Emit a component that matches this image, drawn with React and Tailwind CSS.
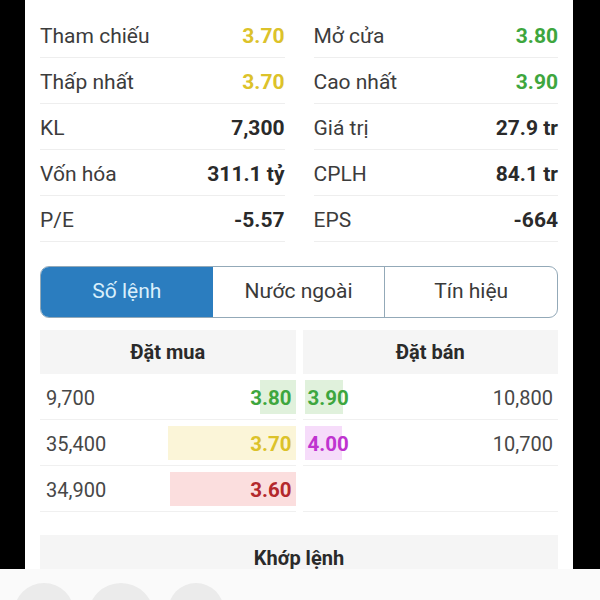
import React from "react";

const stats = [
  [
    { label: "Tham chiếu", value: "3.70", color: "text-[#dcc22a]" },
    { label: "Thấp nhất", value: "3.70", color: "text-[#dcc22a]" },
    { label: "KL", value: "7,300", color: "text-[#2a2a2a]" },
    { label: "Vốn hóa", value: "311.1 tỷ", color: "text-[#2a2a2a]" },
    { label: "P/E", value: "-5.57", color: "text-[#2a2a2a]" },
  ],
  [
    { label: "Mở cửa", value: "3.80", color: "text-[#3ea63e]" },
    { label: "Cao nhất", value: "3.90", color: "text-[#3ea63e]" },
    { label: "Giá trị", value: "27.9 tr", color: "text-[#2a2a2a]" },
    { label: "CPLH", value: "84.1 tr", color: "text-[#2a2a2a]" },
    { label: "EPS", value: "-664", color: "text-[#2a2a2a]" },
  ],
];

// bên mua: khối lượng trái, giá phải
const bids = [
  { vol: "9,700", price: "3.80", text: "text-[#3ea63e]", bar: "bg-[#e0f1dc] w-[36px]" },
  { vol: "35,400", price: "3.70", text: "text-[#dcc22a]", bar: "bg-[#fbf5d8] w-[128px]" },
  { vol: "34,900", price: "3.60", text: "text-[#b3282c]", bar: "bg-[#fbdede] w-[126px]" },
];

const asks = [
  { vol: "10,800", price: "3.90", text: "text-[#3ea63e]", bar: "bg-[#e0f1dc] w-[38px]" },
  { vol: "10,700", price: "4.00", text: "text-[#bf34cf]", bar: "bg-[#f6dcfa] w-[37px]" },
  null,
];

function StatCol({ rows }) {
  return (
    <div className="flex flex-col">
      {rows.map((r) => (
        <div
          key={r.label}
          className="h-[46px] flex items-center justify-between border-b border-[#eeeeee] pt-[5px]"
        >
          <span className="text-[21px] text-[#3c3c3c]">{r.label}</span>
          <span className={`text-[21px] font-bold ${r.color}`}>{r.value}</span>
        </div>
      ))}
    </div>
  );
}

export default function App() {
  return (
    <div
      className="w-[600px] h-[600px] overflow-hidden bg-[#fafafa] flex flex-col"
      style={{ fontFamily: "Roboto, 'Noto Sans', sans-serif" }}
    >
      <div className="h-[569px] flex shrink-0">
        <div className="w-[25px] bg-black" />
        <div className="flex-1 bg-white overflow-hidden px-[15px] pt-[12px]">
          {/* Thông tin giá */}
          <div className="grid grid-cols-2 gap-x-[29px]">
            <StatCol rows={stats[0]} />
            <StatCol rows={stats[1]} />
          </div>

          {/* Tabs */}
          <div className="mt-[24px] h-[52px] flex rounded-[9px] border-[1.5px] border-[#93a9b8] overflow-hidden">
            <div className="flex-1 bg-[#2b7dbf] flex items-center justify-center text-[21px] text-[#d9effb]">
              Số lệnh
            </div>
            <div className="flex-1 flex items-center justify-center text-[21px] text-[#3a3a3a]">
              Nước ngoài
            </div>
            <div className="flex-1 border-l-[1.5px] border-[#93a9b8] flex items-center justify-center text-[21px] text-[#3a3a3a]">
              Tín hiệu
            </div>
          </div>

          {/* Sổ lệnh */}
          <div className="mt-[12px] grid grid-cols-2 gap-x-[7px]">
            <div className="flex flex-col">
              <div className="h-[44px] bg-[#f5f5f5] flex items-center justify-center text-[20px] font-bold text-[#2a2a2a]">
                Đặt mua
              </div>
              {bids.map((b) => (
                <div key={b.vol} className="h-[46px] flex items-center justify-between border-b border-[#f0f0f0] pl-[6px] pt-[3px]">
                  <span className="text-[20px] text-[#474747]">{b.vol}</span>
                  <div className="relative h-full flex items-center">
                    <div className={`absolute right-0 top-[3px] bottom-[5px] ${b.bar}`} />
                    <span className={`relative text-[20.5px] font-bold pr-[4px] ${b.text}`}>{b.price}</span>
                  </div>
                </div>
              ))}
            </div>
            <div className="flex flex-col">
              <div className="h-[44px] bg-[#f5f5f5] flex items-center justify-center text-[20px] font-bold text-[#2a2a2a]">
                Đặt bán
              </div>
              {asks.map((a, i) => (
                <div key={i} className="h-[46px] flex items-center justify-between border-b border-[#f0f0f0] pr-[5px] pt-[3px]">
                  {a ? (
                    <>
                      <div className="relative h-full flex items-center">
                        <div className={`absolute left-[2px] top-[3px] bottom-[5px] ${a.bar}`} />
                        <span className={`relative text-[20.5px] font-bold pl-[5px] ${a.text}`}>{a.price}</span>
                      </div>
                      <span className="text-[20px] text-[#474747]">{a.vol}</span>
                    </>
                  ) : null}
                </div>
              ))}
            </div>
          </div>

          {/* Khớp lệnh */}
          <div className="mt-[23px] h-[44px] bg-[#f5f5f5] flex items-center justify-center text-[20px] font-bold text-[#2a2a2a] pt-[2px]">
            Khớp lệnh
          </div>
        </div>
        <div className="w-[27px] bg-black" />
      </div>

      {/* Thanh dưới */}
      <div className="flex-1 flex gap-[14px] pl-[14px] pt-[14px]">
        <div className="w-[60px] h-[60px] rounded-full bg-[#ebebeb] shrink-0" />
        <div className="w-[66px] h-[66px] rounded-full bg-[#ebebeb] shrink-0" />
        <div className="w-[56px] h-[56px] rounded-full bg-[#ebebeb] shrink-0" />
      </div>
    </div>
  );
}
